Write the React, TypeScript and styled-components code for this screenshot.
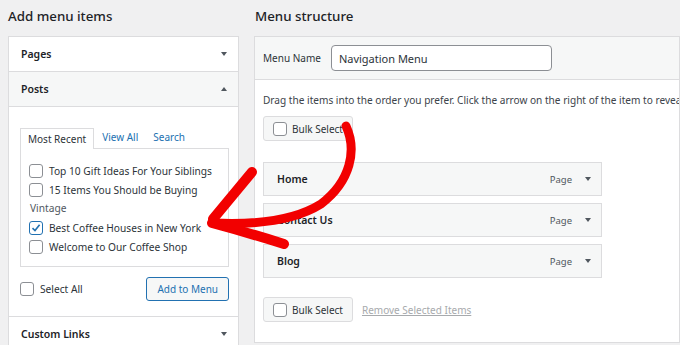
import React from 'react';
import styled, { createGlobalStyle } from 'styled-components';

const GlobalStyle = createGlobalStyle`
  * { box-sizing: border-box; }
  html, body { margin: 0; padding: 0; }
  body {
    background: #f0f0f1;
    font-family: "Noto Sans", "Open Sans", sans-serif;
    color: #2c3338;
    overflow: hidden;
  }
`;

const Page = styled.div`
  position: relative;
  width: 680px;
  height: 345px;
  overflow: hidden;
  display: grid;
  grid-template-columns: 231px 426px;
  column-gap: 15px;
  padding-left: 8px;
`;

const Column = styled.section`
  display: flex;
  flex-direction: column;
  min-width: 0;
`;

const Heading = styled.h2<{ $indent?: number }>`
  margin: 0;
  height: 36px;
  line-height: 32px;
  font-size: 13.3px;
  font-weight: 500;
  color: #1d2327;
  padding-left: ${({ $indent }) => $indent ?? 0}px;
`;

const Panel = styled.div`
  background: #fff;
  border: 1px solid #dcdcde;
`;

const StructurePanel = styled(Panel)`
  height: 307px;
  overflow: hidden;
`;

const SectionHeader = styled.div<{ $open?: boolean }>`
  height: 35px;
  display: flex;
  align-items: center;
  justify-content: space-between;
  padding: 0 11px 0 12px;
  background: ${({ $open }) => ($open ? '#f6f7f7' : '#fff')};
  border-bottom: 1px solid #dcdcde;
  font-size: 10.5px;
  font-weight: 600;
  color: #1d2327;
`;

const Caret = styled.span<{ $up?: boolean }>`
  width: 0;
  height: 0;
  border-left: 3px solid transparent;
  border-right: 3px solid transparent;
  ${({ $up }) => ($up ? 'border-bottom: 4px solid #50575e;' : 'border-top: 4px solid #50575e;')}
`;

const SectionBody = styled.div`
  padding: 20px 9px 15px 11px;
  border-bottom: 1px solid #dcdcde;
`;

const Tabs = styled.div`
  display: flex;
  align-items: flex-end;
  height: 21px;
`;

const Tab = styled.span<{ $active?: boolean }>`
  height: 21px;
  line-height: 20px;
  font-size: 10px;
  position: relative;
  z-index: 1;
  ${({ $active }) =>
    $active
      ? `
    padding: 0 7px;
    color: #2c3338;
    background: #fff;
    border: 1px solid #dcdcde;
    border-bottom: none;
    margin-bottom: -1px;
  `
      : `
    padding: 0 7px 0 8px;
    color: #2271b1;
  `}
`;

const TabPanel = styled.div`
  border: 1px solid #dcdcde;
  padding: 12px 8px 10px 8px;
`;

const CheckRow = styled.label`
  display: flex;
  align-items: center;
  gap: 6px;
  height: 19px;
  font-size: 10.2px;
  color: #2c3338;
  white-space: nowrap;
`;

const GroupLabel = styled.div`
  height: 19px;
  line-height: 19px;
  padding-left: 1px;
  font-size: 10.2px;
  color: #50575e;
`;

const Box = styled.span<{ $checked?: boolean }>`
  flex: none;
  width: 14px;
  height: 14px;
  border-radius: 3px;
  background: #fff;
  border: 1px solid ${({ $checked }) => ($checked ? '#2271b1' : '#8c8f94')};
  display: inline-flex;
  align-items: center;
  justify-content: center;
`;

const FooterRow = styled.div`
  display: flex;
  align-items: center;
  justify-content: space-between;
  margin-top: 10px;
`;

const AddButton = styled.button`
  height: 24px;
  padding: 0 10px;
  border: 1px solid #2271b1;
  border-radius: 3px;
  background: #f6f7f7;
  color: #2271b1;
  font-family: inherit;
  font-size: 10px;
`;

const NameBar = styled.div`
  height: 43px;
  display: flex;
  align-items: center;
  gap: 10px;
  padding: 0 8px;
  background: #f6f7f7;
  border-bottom: 1px solid #dcdcde;
  font-size: 10px;
  color: #2c3338;
`;

const NameInput = styled.div`
  width: 221px;
  height: 26px;
  display: flex;
  align-items: center;
  padding: 0 7px;
  border: 1px solid #8c8f94;
  border-radius: 4px;
  background: #fff;
  font-size: 11px;
  color: #2c3338;
`;

const StructureBody = styled.div`
  padding: 12px 8px 0 8px;
`;

const Hint = styled.p`
  margin: 0;
  font-size: 10.1px;
  line-height: 16px;
  color: #3c434a;
  white-space: nowrap;
`;

const BulkButton = styled.label<{ $top?: number }>`
  display: inline-flex;
  align-items: center;
  gap: 5px;
  height: 25px;
  padding: 0 9px;
  margin-top: ${({ $top }) => $top ?? 0}px;
  border: 1px solid #dcdcde;
  border-radius: 3px;
  background: #f6f7f7;
  font-size: 10px;
  color: #2c3338;
`;

const MenuList = styled.div`
  display: flex;
  flex-direction: column;
  gap: 7px;
  width: 339px;
  margin-top: 21px;
`;

const MenuItem = styled.div`
  height: 34px;
  display: flex;
  align-items: center;
  padding: 0 10px 0 13px;
  border: 1px solid #dcdcde;
  background: #f6f7f7;
  font-size: 10.5px;
  font-weight: 600;
  color: #1d2327;
`;

const ItemMeta = styled.span`
  margin-left: auto;
  display: flex;
  align-items: center;
  gap: 13px;
  font-size: 9.5px;
  font-weight: 400;
  color: #50575e;
`;

const StructureFooter = styled.div`
  display: flex;
  align-items: center;
  gap: 9px;
  margin-top: 19px;
`;

const RemoveLink = styled.span`
  font-size: 10px;
  color: #a7aaad;
  text-decoration: underline;
`;

const Overlay = styled.svg`
  position: absolute;
  left: 0;
  top: 0;
  pointer-events: none;
`;

const Check = ({ checked }: { checked?: boolean }) => (
  <Box $checked={checked}>
    {checked && (
      <svg width="10" height="10" viewBox="0 0 10 10">
        <path d="M1.5 5.2 L4 7.6 L8.6 1.8" stroke="#2271b1" strokeWidth="1.6" fill="none" />
      </svg>
    )}
  </Box>
);

const menuItems = ['Home', 'Contact Us', 'Blog'];

export default function App() {
  return (
    <>
      <GlobalStyle />
      <Page>
        <Column>
          <Heading>Add menu items</Heading>
          <Panel>
            <SectionHeader>
              Pages
              <Caret />
            </SectionHeader>
            <SectionHeader $open>
              Posts
              <Caret $up />
            </SectionHeader>
            <SectionBody>
              <Tabs>
                <Tab $active>Most Recent</Tab>
                <Tab>View All</Tab>
                <Tab>Search</Tab>
              </Tabs>
              <TabPanel>
                <CheckRow>
                  <Check />
                  Top 10 Gift Ideas For Your Siblings
                </CheckRow>
                <CheckRow>
                  <Check />
                  15 Items You Should be Buying
                </CheckRow>
                <GroupLabel>Vintage</GroupLabel>
                <CheckRow>
                  <Check checked />
                  Best Coffee Houses in New York
                </CheckRow>
                <CheckRow>
                  <Check />
                  Welcome to Our Coffee Shop
                </CheckRow>
              </TabPanel>
              <FooterRow>
                <CheckRow>
                  <Check />
                  Select All
                </CheckRow>
                <AddButton>Add to Menu</AddButton>
              </FooterRow>
            </SectionBody>
            <SectionHeader>
              Custom Links
              <Caret />
            </SectionHeader>
          </Panel>
        </Column>

        <Column>
          <Heading $indent={1}>Menu structure</Heading>
          <StructurePanel>
            <NameBar>
              <span>Menu Name</span>
              <NameInput>Navigation Menu</NameInput>
            </NameBar>
            <StructureBody>
              <Hint>
                Drag the items into the order you prefer. Click the arrow on the right of the item to reveal additional configuration options.
              </Hint>
              <BulkButton $top={8}>
                <Check />
                Bulk Select
              </BulkButton>
              <MenuList>
                {menuItems.map((title) => (
                  <MenuItem key={title}>
                    {title}
                    <ItemMeta>
                      Page
                      <Caret />
                    </ItemMeta>
                  </MenuItem>
                ))}
              </MenuList>
              <StructureFooter>
                <BulkButton>
                  <Check />
                  Bulk Select
                </BulkButton>
                <RemoveLink>Remove Selected Items</RemoveLink>
              </StructureFooter>
            </StructureBody>
          </StructurePanel>
        </Column>

        <Overlay width="680" height="345" viewBox="0 0 680 345">
          <g stroke="#f20000" fill="none" strokeLinecap="round" strokeLinejoin="round">
            <path d="M346 126 C 357 150, 351 181, 321 204 C 294 221, 255 225, 213 223" strokeWidth="9" />
            <path d="M252 172 L 213 219" strokeWidth="10" />
            <path d="M212 223 C 238 230, 262 237, 284 244" strokeWidth="10" />
          </g>
        </Overlay>
      </Page>
    </>
  );
}
